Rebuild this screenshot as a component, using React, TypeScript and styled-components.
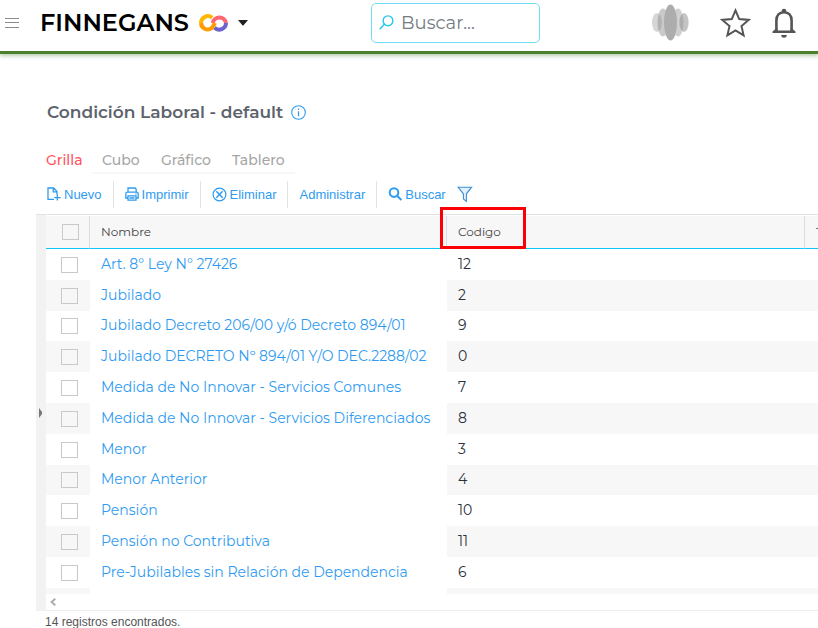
import React from "react";
import styled, { createGlobalStyle } from "styled-components";

const GlobalStyle = createGlobalStyle`
  * { box-sizing: border-box; }
  body { margin: 0; background: #fff; overflow-x: hidden; }
  button, input { font: inherit; }
  svg { display: block; flex: none; }
`;

const display = `"Montserrat", Inter, "Open Sans", sans-serif`;
const blue = "#2f9bf0";

const Page = styled.div`
  min-height: 100vh;
  font-family: ${display};
  color: #2b303b;
`;

const TopBar = styled.header`
  display: grid;
  grid-template-columns: 1fr auto 1fr;
  align-items: center;
  height: 54px;
  padding-bottom: 6px;
  border-bottom: 3px solid #4c7f2e;
  box-shadow: 0 2px 4px rgba(76, 127, 46, 0.4);
`;

const Brand = styled.div`
  display: flex;
  align-items: center;
  padding-left: 5px;
`;

const PlainButton = styled.button`
  display: flex;
  align-items: center;
  padding: 0;
  border: 0;
  background: none;
  color: inherit;
  cursor: pointer;
`;

const BrandButton = styled(PlainButton)`
  margin-left: 20px;
  gap: 10px;
`;

const BrandName = styled.span`
  font-size: 24px;
  font-weight: 600;
  line-height: 32px;
  color: #000;
`;

const SearchBox = styled.label`
  display: flex;
  align-items: center;
  gap: 7px;
  width: 169px;
  height: 40px;
  padding: 0 7px;
  margin-left: 93px;
  border: 1px solid #74dcf8;
  border-radius: 5px;
`;

const SearchInput = styled.input`
  flex: 1;
  min-width: 0;
  padding: 0;
  border: 0;
  outline: 0;
  background: none;
  font-size: 18px;
  color: #444;
  &::placeholder { color: #757c84; opacity: 1; }
`;

const Actions = styled.div`
  display: flex;
  justify-content: flex-end;
  align-items: center;
  padding-right: 22px;
`;

const StarButton = styled(PlainButton)`
  margin: 0 21px 0 31px;
`;

const Main = styled.main`
  padding: 46px 0 0 36px;
`;

const Heading = styled.div`
  display: flex;
  align-items: center;
  gap: 8px;
  height: 24px;
  padding-left: 11px;
`;

const Title = styled.h1`
  margin: 0;
  font-size: 17px;
  font-weight: 600;
  line-height: 24px;
  color: #5d636d;
`;

const Tabs = styled.div`
  display: grid;
  grid-template-columns: 56px 59px 71px 73px;
  margin-top: 22px;
`;

const Tab = styled.button<{ $active?: boolean }>`
  height: 28px;
  padding: 2px 10px 0;
  border: 0;
  border-bottom: 2px solid ${(p) => (p.$active ? "transparent" : "#f7f7f7")};
  background: none;
  font-size: 14px;
  font-weight: 500;
  white-space: nowrap;
  text-align: left;
  color: ${(p) => (p.$active ? "#ff5460" : "#a6a6a6")};
  cursor: pointer;
`;

const Toolbar = styled.div`
  display: flex;
  align-items: center;
  height: 40px;
  font-family: "Liberation Sans", Arial, sans-serif;
  font-size: 13px;
  color: ${blue};
`;

const Tool = styled(PlainButton)<{ $divided?: boolean }>`
  height: 27px;
  gap: 3px;
  padding: 0 11px;
  border-right: ${(p) => (p.$divided ? "1px solid #e3e3e3" : "0")};
`;

const GridFrame = styled.section`
  display: grid;
  grid-template-columns: 10px 1fr;
  border-top: 1px solid #e3e3e3;
`;

const Gutter = styled.button`
  display: flex;
  align-items: center;
  justify-content: flex-end;
  padding: 0 4px 0 0;
  border: 0;
  background: #f2f2f2;
  cursor: pointer;
`;

const GridBody = styled.div`
  min-width: 0;
  padding-top: 1px;
  border-bottom: 1px solid #ececec;
`;

const Table = styled.table`
  width: 100%;
  table-layout: fixed;
  border-collapse: separate;
  border-spacing: 0;
`;

const HeadCell = styled.th`
  position: relative;
  height: 33px;
  padding: 0 0 2px 11px;
  border-bottom: 1px solid #0fc8fb;
  border-right: 1px solid #dcdcdc;
  background: #f7f7f7;
  font-size: 12px;
  font-weight: 400;
  text-align: left;
  white-space: nowrap;
  color: #444;
  &:first-child { padding: 0 0 0 16px; }
  &:last-child { overflow: hidden; border-right: 0; }
`;

const Highlight = styled.span`
  position: absolute;
  left: -7px;
  top: -9px;
  width: 86px;
  height: 42px;
  border: 3px solid #fb0007;
  pointer-events: none;
`;

const Cell = styled.td`
  padding: 0 0 2px 11px;
  font-size: 14px;
  line-height: 20px;
  white-space: nowrap;
`;

const Row = styled.tr`
  height: 31px;
  &:nth-child(5n + 3) { height: 30px; }
  &:nth-child(even) ${Cell} { background: #f7f7f7; }
  &:nth-child(even) ${Cell}:nth-child(2) { background: #fff; }
  & ${Cell}:first-child { padding: 0 0 0 15px; }
`;

const PartialRow = styled(Row)`
  height: 6px;
`;

const Check = styled.input`
  appearance: none;
  display: block;
  width: 17px;
  height: 16px;
  margin: 0;
  border: 1px solid #c8c8cd;
`;

const RecordLink = styled.a`
  color: ${blue};
  text-decoration: none;
`;

const ScrollStrip = styled.div`
  display: flex;
  align-items: center;
  height: 16px;
  padding-left: 4px;
`;

const Status = styled.footer`
  padding: 4px 0 0 9px;
  font-family: "Liberation Sans", Arial, sans-serif;
  font-size: 12px;
  line-height: 14px;
  color: #555;
`;

const records: [string, string][] = [
  ["Art. 8° Ley N° 27426", "12"],
  ["Jubilado", "2"],
  ["Jubilado Decreto 206/00 y/ó Decreto 894/01", "9"],
  ["Jubilado DECRETO Nº 894/01 Y/O DEC.2288/02", "0"],
  ["Medida de No Innovar - Servicios Comunes", "7"],
  ["Medida de No Innovar - Servicios Diferenciados", "8"],
  ["Menor", "3"],
  ["Menor Anterior", "4"],
  ["Pensión", "10"],
  ["Pensión no Contributiva", "11"],
  ["Pre-Jubilables sin Relación de Dependencia", "6"],
];

const MenuIcon = () => (
  <svg width="15" height="12" viewBox="0 0 15 12" stroke="#8b8b8b" strokeWidth="1">
    <path d="M0 1.5h14M0 5.5h14M0 10.5h14" />
  </svg>
);

const LogoMark = () => (
  <svg width="29" height="18" viewBox="0 0 29 18" fill="none" strokeWidth="4">
    <path d="M2 9A6.8 6.8 0 0 1 13.2 3.8" stroke="#ffb800" />
    <path d="M13.8 9A6.7 6.7 0 0 1 27 9" stroke="#ff6672" />
    <path d="M27 9A6.8 6.8 0 0 1 15.4 13.6" stroke="#6c63cf" />
    <path d="M2 9A6.8 6.8 0 0 0 12.6 14.2Q14.6 12 15.8 9" stroke="#ff9a00" />
  </svg>
);

const CaretIcon = () => (
  <svg width="10" height="6" viewBox="0 0 10 6">
    <path d="M0 0h10L5.8 5Q5 6 4.2 5Z" fill="#222" />
  </svg>
);

const LookupIcon = () => (
  <svg width="15" height="15" viewBox="0 0 15 15" fill="none" stroke="#22c8f0" strokeWidth="1.4">
    <circle cx="9" cy="5.8" r="4.9" />
    <path d="M5.4 9.3 0.7 14.2" />
  </svg>
);

const AvatarMark = () => (
  <svg width="37" height="37" viewBox="0 0 37 37" fill="#8a8a8a">
    <ellipse cx="5" cy="18.5" rx="5" ry="9.5" opacity=".35" />
    <ellipse cx="11" cy="18.5" rx="5.5" ry="14" opacity=".45" />
    <ellipse cx="26" cy="18.5" rx="5.5" ry="14" opacity=".4" />
    <ellipse cx="32" cy="18.5" rx="4.6" ry="9.5" opacity=".5" />
    <ellipse cx="18.5" cy="18.5" rx="6.5" ry="18" fill="#adadad" />
  </svg>
);

const StarIcon = () => (
  <svg width="31" height="30" viewBox="0 0 31 30" fill="none" stroke="#555" strokeWidth="2">
    <path d="M15.5 2.4 19.2 11.1 28.6 11.9 21.5 18.1 23.6 27.3 15.5 22.4 7.4 27.3 9.5 18.1 2.4 11.9 11.8 11.1Z" />
  </svg>
);

const BellIcon = () => (
  <svg width="24" height="30" viewBox="0 0 24 30">
    <path d="M4.4 22V12.5C4.4 7.5 7.4 4.2 12 4.2S19.6 7.5 19.6 12.5V22" fill="none" stroke="#555" strokeWidth="2.6" />
    <path d="M9.6 4V3.2a2.4 2.4 0 0 1 4.8 0V4ZM.5 25v-1.4L3.2 21.2H5.7V22.6H18.3V21.2H20.8l2.7 2.4V25ZM9.2 27h5.6a2.8 2.8 0 0 1-5.6 0Z" fill="#555" />
  </svg>
);

const InfoIcon = () => (
  <svg width="15" height="15" viewBox="0 0 15 15" fill="none" stroke={blue}>
    <circle cx="7.5" cy="7.5" r="6.8" strokeWidth="1.1" />
    <path d="M7.5 6.3v5M7.5 3.5v1.4" strokeWidth="1.2" />
  </svg>
);

const NewIcon = () => (
  <svg width="14" height="14" viewBox="0 0 14 14" fill="none" stroke={blue} strokeWidth="1.3">
    <path d="M7 12.4H1V1h5.6L10 4.4v3M6.3 1v3.8H10M10.3 7.6v6M7.3 10.6h6.4" />
  </svg>
);

const PrintIcon = () => (
  <svg width="14" height="14" viewBox="0 0 14 14" fill="none" stroke={blue} strokeWidth="1.3">
    <path d="M3 5V1h7l1.2 1.3V5M3 11H.8V6.8Q.8 5.2 2.4 5.2h9.2q1.6 0 1.6 1.6V11H11M3 8.8h8v4.4H3ZM4.5 11h5M10.5 7h1" />
  </svg>
);

const DeleteIcon = () => (
  <svg width="15" height="15" viewBox="0 0 15 15" fill="none" stroke={blue} strokeWidth="1.2">
    <circle cx="7.5" cy="7.5" r="6.4" />
    <path d="m4.3 4.3 6.4 6.4M10.7 4.3l-6.4 6.4" strokeWidth="1.5" />
  </svg>
);

const FindIcon = () => (
  <svg width="14" height="14" viewBox="0 0 14 14" fill="none" stroke={blue} strokeWidth="2">
    <circle cx="6" cy="5.6" r="4.3" />
    <path d="m9.1 8.8 4.3 4.3" />
  </svg>
);

const FilterIcon = () => (
  <svg width="16" height="17" viewBox="0 0 16 17" fill="#e4f1fc" stroke="#3d8fd8" strokeWidth="1.1">
    <path d="M1 1.2h13.6L9.4 7.8v7.6L6.4 13V7.8Z" />
  </svg>
);

const ExpandIcon = () => (
  <svg width="3" height="10" viewBox="0 0 3 10"><path d="M0 0 3 4v2L0 10Z" fill="#777" /></svg>
);

const ScrollLeftIcon = () => (
  <svg width="6" height="8" viewBox="0 0 6 8" fill="none" stroke="#aaa" strokeWidth="1.8"><path d="M5.3.7 1.5 4l3.8 3.3" /></svg>
);

export default function App() {
  return (
    <Page>
      <GlobalStyle />
      <TopBar>
        <Brand>
          <PlainButton aria-label="Menú"><MenuIcon /></PlainButton>
          <BrandButton>
            <BrandName>FINNEGANS</BrandName>
            <LogoMark />
            <CaretIcon />
          </BrandButton>
        </Brand>
        <SearchBox>
          <LookupIcon />
          <SearchInput type="text" placeholder="Buscar..." aria-label="Buscar" />
        </SearchBox>
        <Actions>
          <PlainButton aria-label="Cuenta"><AvatarMark /></PlainButton>
          <StarButton aria-label="Favoritos"><StarIcon /></StarButton>
          <PlainButton aria-label="Notificaciones"><BellIcon /></PlainButton>
        </Actions>
      </TopBar>
      <Main>
        <Heading>
          <Title>Condición Laboral - default</Title>
          <PlainButton aria-label="Información"><InfoIcon /></PlainButton>
        </Heading>
        <Tabs role="tablist">
          <Tab role="tab" aria-selected="true" $active>Grilla</Tab>
          <Tab role="tab" aria-selected="false">Cubo</Tab>
          <Tab role="tab" aria-selected="false">Gráfico</Tab>
          <Tab role="tab" aria-selected="false">Tablero</Tab>
        </Tabs>
        <Toolbar>
          <Tool $divided><NewIcon />Nuevo</Tool>
          <Tool $divided><PrintIcon />Imprimir</Tool>
          <Tool $divided><DeleteIcon />Eliminar</Tool>
          <Tool $divided>Administrar</Tool>
          <Tool><FindIcon />Buscar</Tool>
          <PlainButton aria-label="Filtrar"><FilterIcon /></PlainButton>
        </Toolbar>
        <GridFrame>
          <Gutter aria-label="Expandir panel"><ExpandIcon /></Gutter>
          <GridBody>
            <Table>
              <colgroup>
                <col width="44" />
                <col width="357" />
                <col width="358" />
                <col />
              </colgroup>
              <thead>
                <tr>
                  <HeadCell><Check type="checkbox" aria-label="Seleccionar todo" /></HeadCell>
                  <HeadCell>Nombre</HeadCell>
                  <HeadCell>Codigo<Highlight /></HeadCell>
                  <HeadCell>T</HeadCell>
                </tr>
              </thead>
              <tbody>
                {records.map(([name, code]) => (
                  <Row key={name}>
                    <Cell><Check type="checkbox" aria-label={name} /></Cell>
                    <Cell><RecordLink href="#">{name}</RecordLink></Cell>
                    <Cell>{code}</Cell>
                    <Cell />
                  </Row>
                ))}
                <PartialRow><Cell /><Cell /><Cell /><Cell /></PartialRow>
              </tbody>
            </Table>
            <ScrollStrip>
              <PlainButton aria-label="Desplazar a la izquierda"><ScrollLeftIcon /></PlainButton>
            </ScrollStrip>
          </GridBody>
        </GridFrame>
        <Status>14 registros encontrados.</Status>
      </Main>
    </Page>
  );
}
